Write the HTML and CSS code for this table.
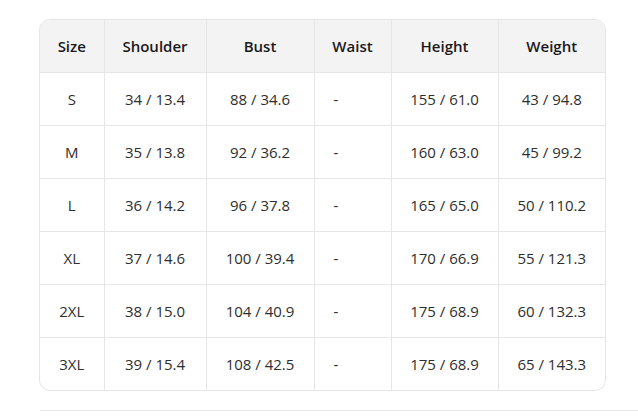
FILE: index.html
```html
<!DOCTYPE html>
<html>
<head>
<meta charset="utf-8">
<link rel="stylesheet" href="styles.css">
</head>
<body>
<div class="page">
  <div class="table-wrap">
    <table class="size-table">
      <colgroup>
        <col class="c-size">
        <col class="c-shoulder">
        <col class="c-bust">
        <col class="c-waist">
        <col class="c-height">
        <col class="c-weight">
      </colgroup>
      <thead>
        <tr><th>Size</th><th>Shoulder</th><th>Bust</th><th>Waist</th><th>Height</th><th>Weight</th></tr>
      </thead>
      <tbody>
        <tr><td>S</td><td>34 / 13.4</td><td>88 / 34.6</td><td class="waist">-</td><td>155 / 61.0</td><td>43 / 94.8</td></tr>
        <tr><td>M</td><td>35 / 13.8</td><td>92 / 36.2</td><td class="waist">-</td><td>160 / 63.0</td><td>45 / 99.2</td></tr>
        <tr><td>L</td><td>36 / 14.2</td><td>96 / 37.8</td><td class="waist">-</td><td>165 / 65.0</td><td>50 / 110.2</td></tr>
        <tr><td>XL</td><td>37 / 14.6</td><td>100 / 39.4</td><td class="waist">-</td><td>170 / 66.9</td><td>55 / 121.3</td></tr>
        <tr><td>2XL</td><td>38 / 15.0</td><td>104 / 40.9</td><td class="waist">-</td><td>175 / 68.9</td><td>60 / 132.3</td></tr>
        <tr><td>3XL</td><td>39 / 15.4</td><td>108 / 42.5</td><td class="waist">-</td><td>175 / 68.9</td><td>65 / 143.3</td></tr>
      </tbody>
    </table>
  </div>
  <div class="divider"></div>
</div>
</body>
</html>
```
FILE: styles.css
```css
html, body {
  margin: 0;
  padding: 0;
  background: #ffffff;
}
.page {
  padding: 19px 0 0 39px;
  font-family: "Open Sans", "Noto Sans", sans-serif;
  color: #2e2e2e;
}
.table-wrap {
  width: 567px;
  border: 1px solid #e6e6e6;
  border-radius: 11px;
  overflow: hidden;
  box-sizing: border-box;
}
.size-table {
  width: 100%;
  border-collapse: collapse;
  table-layout: fixed;
  font-size: 15px;
}
.c-size { width: 64px; }
.c-shoulder { width: 102px; }
.c-bust { width: 108px; }
.c-waist { width: 77px; }
.c-height { width: 107px; }
.c-weight { width: auto; }
.size-table th,
.size-table td {
  height: 52px;
  padding: 0;
  text-align: center;
  vertical-align: middle;
  border-right: 1px solid #e6e6e6;
  border-bottom: 1px solid #e6e6e6;
}
.size-table th:last-child,
.size-table td:last-child {
  border-right: none;
}
.size-table tbody tr:last-child td {
  border-bottom: none;
}
.size-table th {
  background: #f3f3f3;
  font-weight: 600;
  color: #1a1a1a;
}
.size-table td.waist {
  text-align: left;
  padding-left: 19px;
}
.divider {
  margin-top: 19px;
  margin-left: 1px;
  border-top: 1px solid #ebebeb;
}
```
